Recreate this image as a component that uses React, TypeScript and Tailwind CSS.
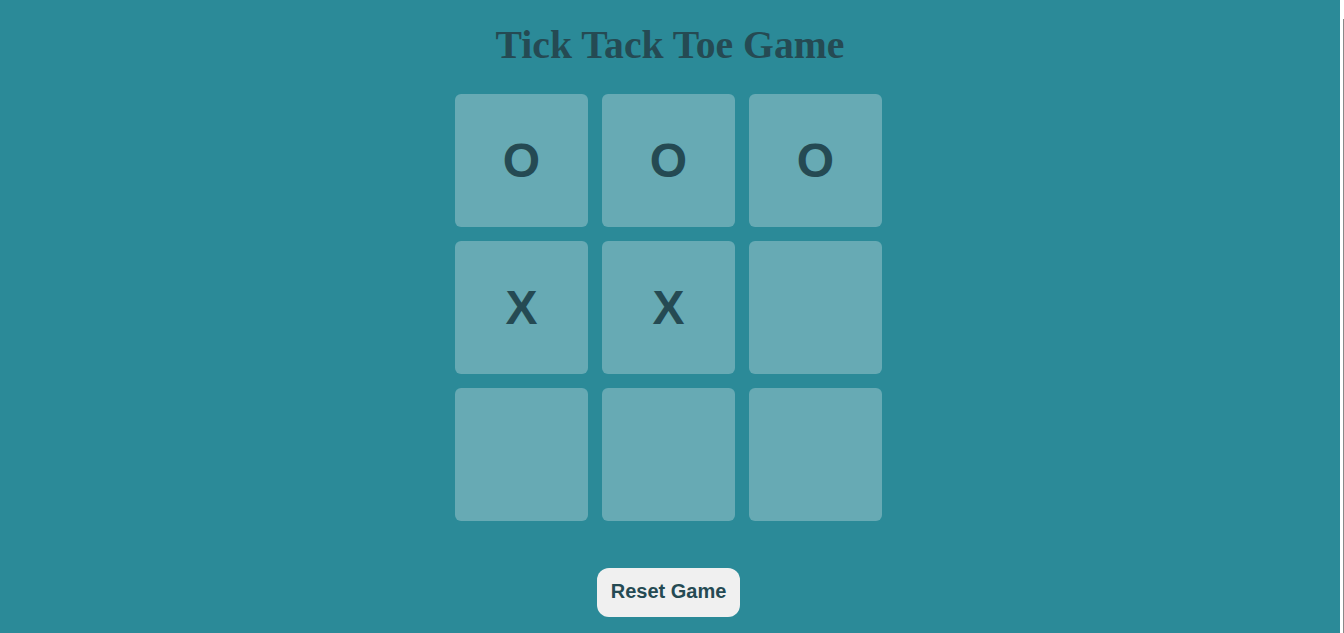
import { useState } from "react"

const START: string[] = ["O", "O", "O", "X", "X", "", "", "", ""]

export default function App() {
    const [board, setBoard] = useState<string[]>(START)

    return (
        <div className="flex h-[633px] w-full overflow-hidden bg-[#2b8a98]">
            <main className="flex flex-1 flex-col items-center pt-[22px]">
                <h1 className="text-[39.7px] font-bold leading-[46px] text-[#254a53]" style={{ fontFamily: '"Liberation Serif", "Times New Roman", serif' }}>
                    Tick Tack Toe Game
                </h1>

                <div className="mt-[26px] ml-[-3px] grid grid-cols-[repeat(3,133px)] gap-x-[14px] gap-y-[14px]">
                    {board.map((v, i) => (
                        <button
                            key={i}
                            className="flex h-[133px] w-[133px] items-center justify-center rounded-[6px] bg-[#67aab4] text-[48px] font-bold text-[#254a53]"
                            style={{ fontFamily: '"Liberation Sans", Arial, sans-serif' }}
                            onClick={() => {
                                if (v) return
                                const next = [...board]
                                next[i] = board.filter(Boolean).length % 2 === 0 ? "O" : "X"
                                setBoard(next)
                            }}
                        >
                            {v}
                        </button>
                    ))}
                </div>

                <button
                    className="mt-[47px] ml-[-3px] h-[49px] w-[143px] rounded-[12px] bg-[#f0f0f0] pb-[3px] text-[20px] font-bold text-[#254a53]"
                    style={{ fontFamily: '"Liberation Sans", Arial, sans-serif' }}
                    onClick={() => setBoard(Array(9).fill(""))}
                >
                    Reset Game
                </button>
            </main>

            {/* thin scroll track at the right edge */}
            <div className="flex w-[4px] flex-col bg-white pt-[19px]">
                <div className="ml-[3px] h-full w-[1px] bg-[#8a8a8a]" />
            </div>
        </div>
    )
}
